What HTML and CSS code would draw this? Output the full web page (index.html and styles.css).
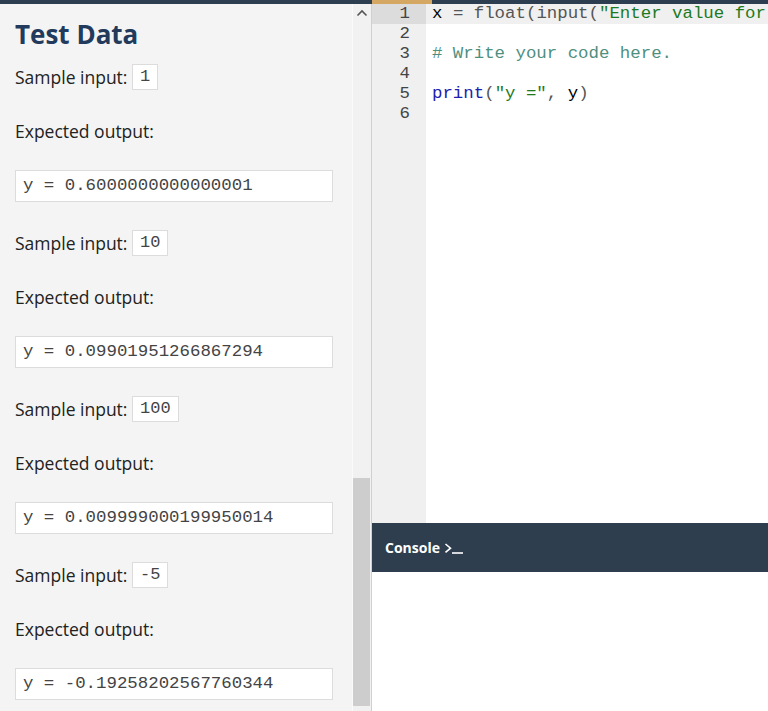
FILE: index.html
```html
<!DOCTYPE html>
<html>
<head>
<meta charset="utf-8">
<link rel="stylesheet" href="styles.css">
</head>
<body>
<div class="topbar">
  <div class="topbar-left"></div>
  <div class="topbar-tab"></div>
  <div class="topbar-rest"></div>
</div>
<div class="main">
  <section class="left">
    <h1 class="title">Test Data</h1>
    <div class="case">
      <div class="sample">Sample input: <code class="chip">1</code></div>
      <div class="label">Expected output:</div>
      <pre class="out">y = 0.6000000000000001</pre>
    </div>
    <div class="case">
      <div class="sample">Sample input: <code class="chip">10</code></div>
      <div class="label">Expected output:</div>
      <pre class="out">y = 0.09901951266867294</pre>
    </div>
    <div class="case">
      <div class="sample">Sample input: <code class="chip">100</code></div>
      <div class="label">Expected output:</div>
      <pre class="out">y = 0.009999000199950014</pre>
    </div>
    <div class="case">
      <div class="sample">Sample input: <code class="chip">-5</code></div>
      <div class="label">Expected output:</div>
      <pre class="out">y = -0.19258202567760344</pre>
    </div>
  </section>
  <div class="scrollbar">
    <div class="sb-up"><svg width="12" height="8" viewBox="0 0 12 8"><path d="M1.5 6.5 L6 2 L10.5 6.5" fill="none" stroke="#555" stroke-width="1.6"/></svg></div>
    <div class="sb-space"></div>
    <div class="sb-thumb"></div>
  </div>
  <section class="right">
    <div class="editor">
      <div class="gutter">
        <div class="ln active">1</div>
        <div class="ln">2</div>
        <div class="ln">3</div>
        <div class="ln">4</div>
        <div class="ln">5</div>
        <div class="ln">6</div>
      </div>
      <div class="code">
        <div class="line active"><span class="id">x</span> <span class="op">=</span> <span class="fn">float</span><span class="op">(</span><span class="fn">input</span><span class="op">(</span><span class="str">"Enter value for</span></div>
        <div class="line"></div>
        <div class="line"><span class="cm"># Write your code here.</span></div>
        <div class="line"></div>
        <div class="line"><span class="kw">print</span><span class="op">(</span><span class="str">"y ="</span><span class="op">, </span><span class="id">y</span><span class="op">)</span></div>
        <div class="line"></div>
      </div>
    </div>
    <div class="console">
      <span class="console-title">Console</span>
      <svg class="prompt" width="20" height="12" viewBox="0 0 20 12"><path d="M1.5 2 L6.5 6.2 L1.5 10.4" fill="none" stroke="#fff" stroke-width="1.6"/><path d="M8 11 L19 11" stroke="#fff" stroke-width="1.6"/></svg>
    </div>
    <div class="output"></div>
  </section>
</div>
</body>
</html>
```
FILE: styles.css
```css
html, body {
  margin: 0;
  padding: 0;
  height: 100%;
  overflow: hidden;
}
body {
  font-family: "Open Sans", "Noto Sans", sans-serif;
  background: #fff;
  color: #222;
}
.topbar {
  display: flex;
  height: 4px;
}
.topbar-left {
  width: 372px;
  background: #2c3e50;
}
.topbar-tab {
  width: 60px;
  background: #d4a862;
}
.topbar-rest {
  flex: 1;
  background: #2c3e50;
}
.main {
  display: flex;
  height: 707px;
}
.left {
  width: 337px;
  padding-left: 15px;
  background: #f4f4f4;
  overflow: hidden;
}
.title {
  margin: 13px 0 0 0;
  font-size: 26px;
  line-height: 34px;
  font-weight: 700;
  color: #223b5c;
}
.case {
  margin-top: 13px;
}
.case + .case {
  margin-top: 28px;
}
.sample {
  display: flex;
  align-items: center;
  height: 26px;
  font-size: 17.5px;
  color: #222;
  white-space: pre;
}
.chip {
  box-sizing: border-box;
  height: 26px;
  padding: 0 7px;
  background: #fff;
  border: 1px solid #dcdcdc;
  font-family: "Courier New", "Liberation Mono", monospace;
  font-size: 17px;
  line-height: 24px;
  color: #444;
}
.label {
  margin-top: 29px;
  font-size: 17.5px;
  line-height: 24px;
  color: #222;
}
.out {
  box-sizing: border-box;
  margin: 27px 0 0 0;
  width: 318px;
  height: 32px;
  padding: 0 7px;
  background: #fff;
  border: 1px solid #dcdcdc;
  font-family: "Courier New", "Liberation Mono", monospace;
  font-size: 17.4px;
  line-height: 30px;
  color: #444;
}
.scrollbar {
  box-sizing: border-box;
  width: 20px;
  display: flex;
  flex-direction: column;
  background: #f1f1f1;
  border-left: 1px solid #fafafa;
  border-right: 1px solid #d0d0d0;
}
.sb-up {
  height: 18px;
  display: flex;
  align-items: center;
  justify-content: center;
}
.sb-space {
  flex: 1;
}
.sb-thumb {
  height: 228px;
  margin: 0 1px 5px 0;
  background: #cdcdcd;
}
.right {
  flex: 1;
  display: flex;
  flex-direction: column;
  min-width: 0;
}
.editor {
  height: 519px;
  display: flex;
  background: #fff;
  overflow: hidden;
  font-family: "Courier New", "Liberation Mono", monospace;
  font-size: 17.4px;
  line-height: 20px;
}
.gutter {
  width: 54px;
  flex: none;
  background: #f0f0f0;
  color: #444;
}
.ln {
  height: 20px;
  text-align: right;
  padding-right: 16px;
}
.ln.active {
  background: #dcdcdc;
}
.code {
  flex: 1;
  min-width: 0;
}
.line {
  height: 20px;
  padding-left: 6px;
  white-space: pre;
  overflow: hidden;
}
.line.active {
  background: #f0f0f0;
}
.id { color: #000; }
.op { color: #555; }
.fn { color: #555; }
.str { color: #1e7a1e; }
.cm { color: #4f8f7f; }
.kw { color: #2020b0; }
.console {
  height: 49px;
  display: flex;
  align-items: center;
  padding-left: 13px;
  background: #2e3e4f;
  color: #fff;
}
.console-title {
  font-size: 14px;
  font-weight: 700;
}
.prompt {
  margin-left: 4px;
}
.output {
  flex: 1;
  background: #fff;
}
```
